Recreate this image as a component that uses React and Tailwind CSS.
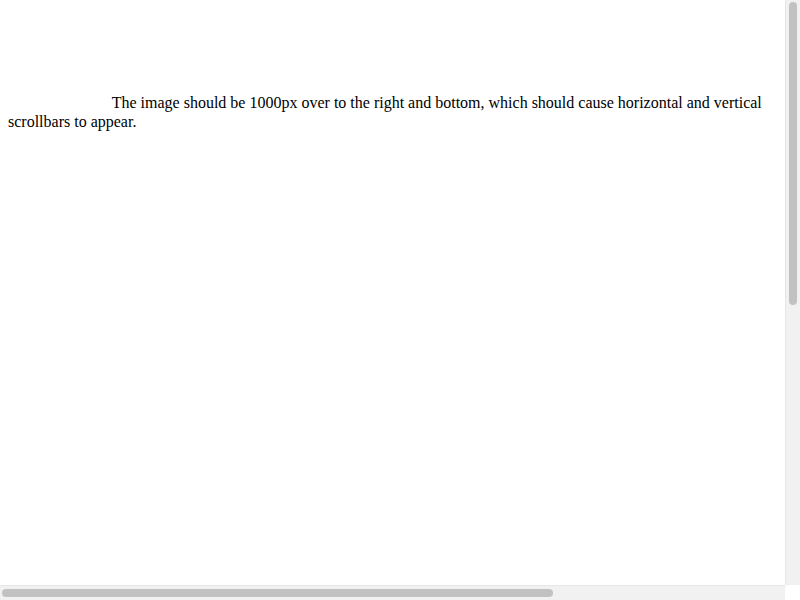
export default function App() {
  return (
    <div className="p-2 bg-white text-black text-base leading-[19px]" style={{ fontFamily: '"Liberation Serif", "Times New Roman", serif' }}>
      <span className="relative left-[1000px] top-[1000px] inline-block w-[100px] h-[100px]"></span>{" "}
      The image should be 1000px over to the right and bottom, which should cause horizontal and vertical scrollbars to appear.
      {/* vertical scrollbar */}
      <div className="fixed top-0 left-[785px] w-[15px] h-[585px] bg-[#f1f1f1] border-l border-[#e6e6e6] flex justify-center pt-[2px]">
        <div className="w-[8px] h-[303px] rounded-full bg-[#c1c1c1]"></div>
      </div>
      {/* horizontal scrollbar */}
      <div className="fixed left-0 top-[585px] w-[785px] h-[15px] bg-[#f1f1f1] border-t border-[#e6e6e6] flex items-center pl-[2px]">
        <div className="w-[551px] h-[8px] rounded-full bg-[#c1c1c1]"></div>
      </div>
      <div className="fixed left-[785px] top-[585px] w-[15px] h-[15px] bg-white"></div>
    </div>
  );
}
